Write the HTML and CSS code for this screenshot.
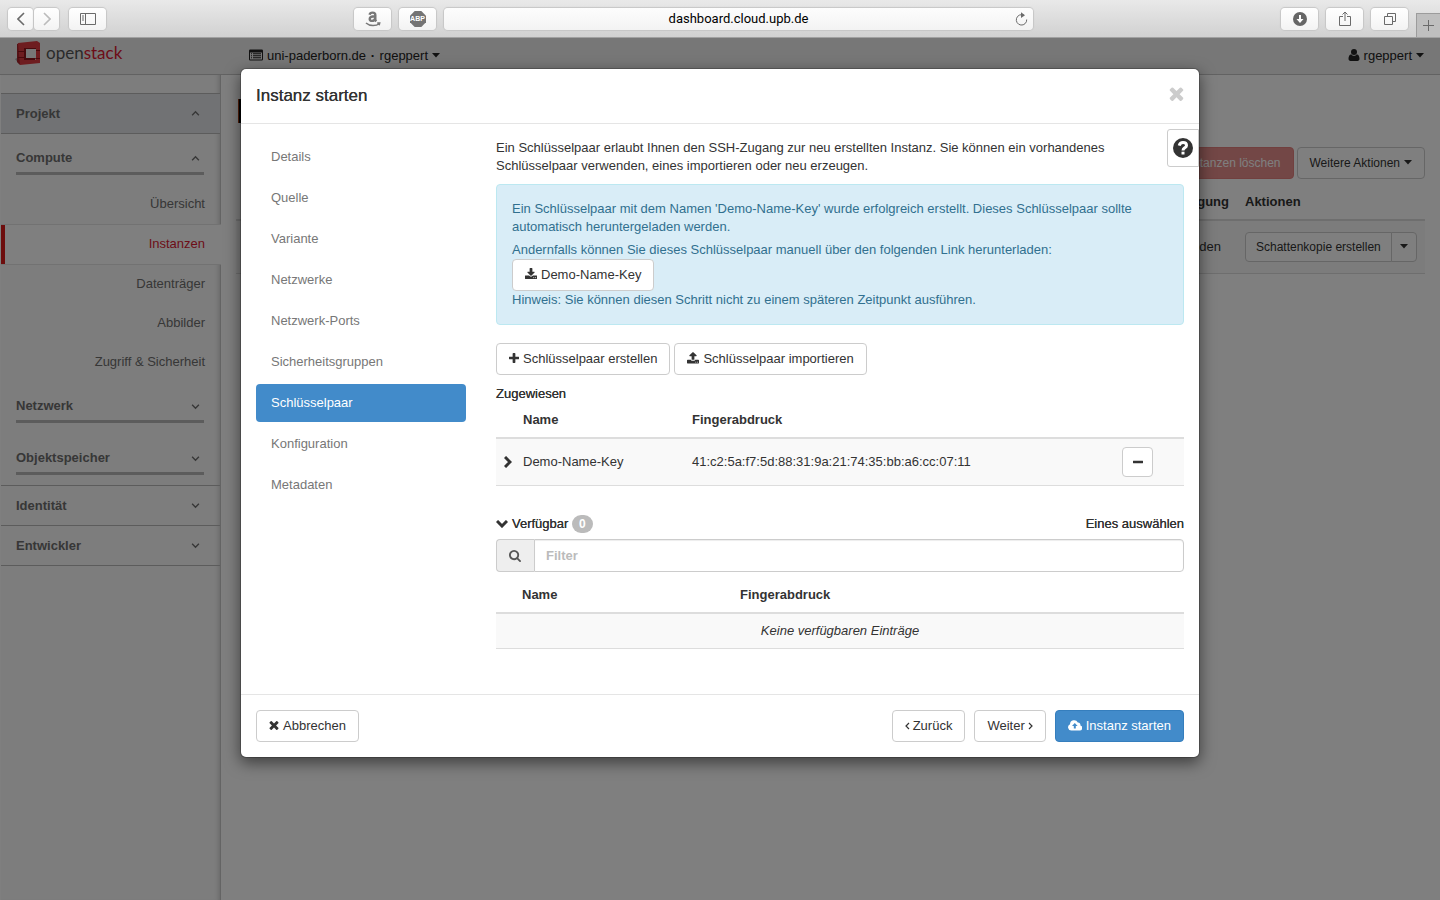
FILE: index.html
```html
<!DOCTYPE html>
<html lang="de">
<head>
<meta charset="utf-8">
<title>Instanz starten</title>
<link rel="stylesheet" href="styles.css">
</head>
<body>
<svg class="sprite" aria-hidden="true">
  <symbol id="caret" viewBox="0 0 8 5"><path d="M0 0h8L4 4.500z"/></symbol>
  <symbol id="up" viewBox="0 0 8 8"><path class="thin" d="M1 5.500 4 2.500 7 5.500"/></symbol>
  <symbol id="down" viewBox="0 0 8 8"><path class="thin" d="M1 2.500 4 5.500 7 2.500"/></symbol>
  <symbol id="plus" viewBox="192 128 1408 1408"><path d="M1600 736v192q0 40-28 68t-68 28h-416v416q0 40-28 68t-68 28h-192q-40 0-68-28t-28-68v-416h-416q-40 0-68-28t-28-68v-192q0-40 28-68t68-28h416v-416q0-40 28-68t68-28h192q40 0 68 28t28 68v416h416q40 0 68 28t28 68z"/></symbol>
  <symbol id="minus" viewBox="192 128 1408 1408"><path d="M1600 736v192q0 40-28 68t-68 28h-1216q-40 0-68-28t-28-68v-192q0-40 28-68t68-28h1216q40 0 68 28t28 68z"/></symbol>
  <symbol id="times" viewBox="240 240 1312 1312"><path d="M1490 1322q0 40-28 68l-136 136q-28 28-68 28t-68-28l-294-294-294 294q-28 28-68 28t-68-28l-136-136q-28-28-28-68t28-68l294-294-294-294q-28-28-28-68t28-68l136-136q28-28 68-28t68 28l294 294 294-294q28-28 68-28t68 28l136 136q28 28 28 68t-28 68l-294 294 294 294q28 28 28 68z"/></symbol>
  <symbol id="download" viewBox="64 0 1664 1664"><path d="M1344 1344q0-26-19-45t-45-19-45 19-19 45 19 45 45 19 45-19 19-45zm256 0q0-26-19-45t-45-19-45 19-19 45 19 45 45 19 45-19 19-45zm128-224v320q0 40-28 68t-68 28h-1472q-40 0-68-28t-28-68v-320q0-40 28-68t68-28h465l135 136q58 56 136 56t136-56l136-136h464q40 0 68 28t28 68zm-325-569q17 41-14 70l-448 448q-18 19-45 19t-45-19l-448-448q-31-29-14-70 17-39 59-39h256v-448q0-26 19-45t45-19h256q26 0 45 19t19 45v448h256q42 0 59 39z"/></symbol>
  <symbol id="upload" viewBox="64 64 1664 1664"><path d="M1344 1472q0-26-19-45t-45-19-45 19-19 45 19 45 45 19 45-19 19-45zm256 0q0-26-19-45t-45-19-45 19-19 45 19 45 45 19 45-19 19-45zm128-224v320q0 40-28 68t-68 28h-1472q-40 0-68-28t-28-68v-320q0-40 28-68t68-28h427q21 56 70.500 92t110.500 36h256q61 0 110.500-36t70.500-92h427q40 0 68 28t28 68zm-325-648q-17 40-59 40h-256v448q0 26-19 45t-45 19h-256q-26 0-45-19t-19-45v-448h-256q-42 0-59-40-17-39 14-69l448-448q18-19 45-19t45 19l448 448q31 30 14 69z"/></symbol>
  <symbol id="search" viewBox="64 128 1664 1664"><path d="M1216 832q0-185-131.500-316.500t-316.500-131.500-316.500 131.500-131.500 316.500 131.500 316.500 316.500 131.500 316.500-131.500 131.500-316.500zm512 832q0 52-38 90t-90 38q-54 0-90-38l-343-342q-179 124-399 124-143 0-273.500-55.500t-225-150-150-225-55.500-273.500 55.500-273.500 150-225 225-150 273.500-55.500 273.500 55.500 225 150 150 225 55.500 273.500q0 220-124 399l343 343q37 37 37 90z"/></symbol>
  <symbol id="user" viewBox="0 0 12 12"><circle cx="6" cy="3" r="3"/><path d="M3.300 5.200C1.300 5.600.5 7.500.5 9.800c0 1.300.8 2.200 2 2.200h7c1.200 0 2-.9 2-2.200 0-2.300-.8-4.200-2.800-4.600C8 6.200 7 6.700 6 6.700s-2-.5-2.700-1.500z"/></symbol>
  <symbol id="list" viewBox="0 0 14 12"><path fill-rule="evenodd" d="M1.200.5h11.600q1.200 0 1.200 1.200v8.600q0 1.200-1.200 1.200H1.200Q0 11.500 0 10.300V1.700Q0 .5 1.200.5zM1 3.500v6.700l.3.300h11.400l.3-.3V3.500z"/><path d="M2 4.300h1v1H2zm2 0h8v1H4zm-2 2h1v1H2zm2 0h8v1H4zm-2 2h1v1H2zm2 0h8v1H4z"/></symbol>
  <symbol id="cloud" viewBox="0 1 14 11"><path fill-rule="evenodd" d="M3.500 11.500A3.300 3.300 0 0 1 2 5.200 4.100 4.100 0 0 1 9.800 3.600a2.400 2.400 0 0 1 2.600 2.800 2.600 2.600 0 0 1-.9 5.100zM6.800 4 4 6.900h1.800v2.700h2V6.900h1.800z"/></symbol>
  <symbol id="help" viewBox="0 0 20 20"><circle cx="10" cy="10" r="10"/><path fill="none" stroke="#fff" stroke-width="3" d="M6.200 7.600C6.800 5.500 8.200 4.500 10 4.500c2 0 3.500 1.100 3.500 2.900 0 2.500-3.500 2.400-3.500 5"/><path fill="#fff" d="M8.500 13.700h3v2.800h-3z"/></symbol>
</svg>

<header class="browser">
  <div class="tools">
    <div class="pair">
      <button class="tool half" aria-label="Zurück"><svg width="8" height="14" viewBox="0 0 8 14"><path class="line bold" d="M7 1 1 7l6 6"/></svg></button>
      <button class="tool half faint" aria-label="Vorwärts"><svg width="8" height="14" viewBox="0 0 8 14"><path class="line bold" d="m1 1 6 6-6 6"/></svg></button>
    </div>
    <button class="tool" aria-label="Seitenleiste"><svg width="16" height="12" viewBox="0 0 16 12"><path class="line" d="M.5.500h15v11H.5zM5.500.500v11M2 3h2M2 5h2M2 7h2"/></svg></button>
  </div>
  <div class="tools">
    <button class="tool" aria-label="Amazon"><svg width="16" height="16" viewBox="0 0 16 16"><path fill="none" stroke="#777" stroke-width="2.400" d="M4.600 3.800C4.900 2.100 6.100 1.600 7.600 1.600c1.800 0 2.700.8 2.700 2.400v4.200c0 1 .3 1.500 1 2.200M10.200 5.200C6.500 5.100 4.700 6 4.700 7.900c0 2.700 4.500 2.800 5.500-.6"/><path fill="none" stroke="#777" stroke-width="1.500" d="M1 12c4 3.500 10 3.300 13.500.5M12.200 12h2.500l-.6 2.300"/></svg></button>
    <button class="tool abp">
      <svg width="16" height="16" viewBox="0 0 16 16" aria-hidden="true"><path fill="#747474" d="M4.700 0h6.600L16 4.700v6.600L11.300 16H4.700L0 11.300V4.700z"/></svg>
      <span>ABP</span>
    </button>
    <div class="address"><span>dashboard.cloud.upb.de</span>
      <svg width="13" height="14" viewBox="0 0 13 14"><path class="line" d="M9 3.300A5.200 5.200 0 1 0 11.700 7.500"/><path fill="#6a6a6a" d="M6 .300 10 3.300 6 6z"/></svg>
    </div>
  </div>
  <div class="tools end">
    <button class="tool" aria-label="Downloads"><svg width="14" height="14" viewBox="0 0 14 14"><circle cx="7" cy="7" r="7" fill="#666"/><path fill="#fff" d="M6 3h2v4h2.500L7 11 3.500 7H6z"/></svg></button>
    <button class="tool" aria-label="Teilen"><svg width="12" height="16" viewBox="0 0 12 16"><path class="line" d="M4 5.500H.5v9h11v-9H8M6 10V1M3.500 3.500 6 1l2.500 2.500"/></svg></button>
    <button class="tool" aria-label="Tabs"><svg width="12" height="12" viewBox="0 0 12 12"><path class="line" d="M.5 3.500h8v8h-8zM3.500 3.500v-3h8v8h-3"/></svg></button>
    <button class="newtab" aria-label="Neuer Tab"><svg width="11" height="11" viewBox="0 0 11 11"><path class="line" d="M5.500 0v11M0 5.500h11"/></svg></button>
  </div>
</header>

<div class="app">
  <div class="topbar">
    <div class="brand">
      <svg width="26" height="25" viewBox="0 0 26 25" aria-hidden="true"><path fill="#aaa" d="m0 18 4-2v7z"/><path fill="#a8242a" d="m2 3 3-1v22l-3-3z"/><path fill="#dc3a40" fill-rule="evenodd" d="M3 2 22 0l3 2v20L5 24zM9 7v12h12V7z"/><path fill="#eee" d="M11 8h10v9H11z"/><path fill="#8f151b" d="M9 7h12v1H11v9l-2 2zM3 10h6v1H3zM3 16h6v1H3zM21 9h4v1h-4zM21 17h4v1h-4zM11 17h10l-1 2H9z"/></svg>
      <span>open<b>stack</b></span>
    </div>
    <a class="context" href="#"><svg class="list" width="14" height="12"><use href="#list"/></svg>uni-paderborn.de <b>·</b> rgeppert<svg class="caret"><use href="#caret"/></svg></a>
    <a class="account" href="#"><svg class="person" width="12" height="12"><use href="#user"/></svg>rgeppert<svg class="caret"><use href="#caret"/></svg></a>
  </div>
  <div class="page">
    <nav class="sidebar">
      <button class="panel current">Projekt<svg class="angle"><use href="#up"/></svg></button>
      <button class="group">Compute<svg class="angle"><use href="#up"/></svg></button>
      <ul class="links">
        <li><a href="#">Übersicht</a></li>
        <li><a class="active" href="#">Instanzen</a></li>
        <li><a href="#">Datenträger</a></li>
        <li><a href="#">Abbilder</a></li>
        <li><a href="#">Zugriff &amp; Sicherheit</a></li>
      </ul>
      <button class="group">Netzwerk<svg class="angle"><use href="#down"/></svg></button>
      <button class="group last">Objektspeicher<svg class="angle"><use href="#down"/></svg></button>
      <button class="panel">Identität<svg class="angle"><use href="#down"/></svg></button>
      <button class="panel">Entwickler<svg class="angle"><use href="#down"/></svg></button>
    </nav>
    <main class="main">
      <div class="mark"></div>
      <div class="actions">
        <button class="btn danger" disabled>Instanzen löschen</button>
        <button class="btn">Weitere Aktionen<svg class="caret"><use href="#caret"/></svg></button>
      </div>
      <table class="table instances">
        <thead><tr><th class="age">Erzeugung</th><th class="do">Aktionen</th></tr></thead>
        <tbody><tr><td class="age">Stunden</td><td class="do"><div class="split"><button class="btn">Schattenkopie erstellen</button><button class="btn" aria-label="Mehr"><svg class="caret"><use href="#caret"/></svg></button></div></td></tr></tbody>
      </table>
    </main>
  </div>

  <div class="backdrop">
    <section class="modal" role="dialog" aria-labelledby="title">
      <header class="modal-head">
        <h1 id="title">Instanz starten</h1>
        <button class="close" aria-label="Schließen"><svg width="15" height="15"><use href="#times"/></svg></button>
      </header>
      <div class="modal-body">
        <button class="help" aria-label="Hilfe"><svg width="20" height="20"><use href="#help"/></svg></button>
        <ul class="steps">
          <li><a href="#">Details</a></li>
          <li><a href="#">Quelle</a></li>
          <li><a href="#">Variante</a></li>
          <li><a href="#">Netzwerke</a></li>
          <li><a href="#">Netzwerk-Ports</a></li>
          <li><a href="#">Sicherheitsgruppen</a></li>
          <li><a class="active" href="#">Schlüsselpaar</a></li>
          <li><a href="#">Konfiguration</a></li>
          <li><a href="#">Metadaten</a></li>
        </ul>
        <div class="content">
          <p class="intro">Ein Schlüsselpaar erlaubt Ihnen den SSH-Zugang zur neu erstellten Instanz. Sie können ein vorhandenes Schlüsselpaar verwenden, eines importieren oder neu erzeugen.</p>
          <div class="alert">
            <p>Ein Schlüsselpaar mit dem Namen 'Demo-Name-Key' wurde erfolgreich erstellt. Dieses Schlüsselpaar sollte automatisch heruntergeladen werden.</p>
            <p>Andernfalls können Sie dieses Schlüsselpaar manuell über den folgenden Link herunterladen:</p>
            <a class="btn" href="#"><svg class="icon"><use href="#download"/></svg>Demo-Name-Key</a>
            <p>Hinweis: Sie können diesen Schritt nicht zu einem späteren Zeitpunkt ausführen.</p>
          </div>
          <div class="create">
            <button class="btn"><svg class="icon small"><use href="#plus"/></svg>Schlüsselpaar erstellen</button>
            <button class="btn"><svg class="icon"><use href="#upload"/></svg>Schlüsselpaar importieren</button>
          </div>
          <h2>Zugewiesen</h2>
          <table class="table assigned">
            <thead><tr><th class="toggle"></th><th class="name">Name</th><th>Fingerabdruck</th><th class="act"></th></tr></thead>
            <tbody><tr><td class="toggle"><svg width="8" height="12" viewBox="0 0 8 12"><path class="thick" d="m1 1 5 5-5 5"/></svg></td><td>Demo-Name-Key</td><td>41:c2:5a:f7:5d:88:31:9a:21:74:35:bb:a6:cc:07:11</td><td><button class="btn remove" aria-label="Entfernen"><svg width="10" height="10"><use href="#minus"/></svg></button></td></tr></tbody>
          </table>
          <div class="available">
            <h2><svg width="12" height="8" viewBox="0 0 12 8"><path class="thick" d="m1 1 5 5 5-5"/></svg>Verfügbar <span class="badge">0</span></h2>
            <span>Eines auswählen</span>
          </div>
          <div class="filter">
            <label for="filter" aria-label="Filter"><svg width="12" height="12"><use href="#search"/></svg></label>
            <input id="filter" type="text" placeholder="Filter">
          </div>
          <table class="table choices">
            <thead><tr><th class="toggle"></th><th class="name">Name</th><th>Fingerabdruck</th></tr></thead>
            <tbody><tr><td class="empty" colspan="3">Keine verfügbaren Einträge</td></tr></tbody>
          </table>
        </div>
      </div>
      <footer class="modal-foot">
        <button class="btn cancel"><svg class="icon small"><use href="#times"/></svg>Abbrechen</button>
        <button class="btn"><svg class="step before" viewBox="0 0 5 8"><path class="thin" d="M4 1 1 4l3 3"/></svg>Zurück</button>
        <button class="btn">Weiter<svg class="step after" viewBox="0 0 5 8"><path class="thin" d="m1 1 3 3-3 3"/></svg></button>
        <button class="btn primary"><svg class="cloud" width="14" height="11"><use href="#cloud"/></svg>Instanz starten</button>
      </footer>
    </section>
  </div>
</div>
</body>
</html>
```
FILE: styles.css
```css
* { box-sizing: border-box; }

body {
  margin: 0;
  min-height: 100vh;
  display: flex;
  flex-direction: column;
  font: 13px/18px "Liberation Sans", Arial, sans-serif;
  color: #333;
}

button, input { font: inherit; color: inherit; margin: 0; }
button { cursor: pointer; }
a { color: inherit; text-decoration: none; }
ul { list-style: none; margin: 0; padding: 0; }
p, h1, h2 { margin: 0; }
svg { fill: currentColor; flex: none; }

.sprite { display: none; }
.thin { fill: none; stroke: currentColor; stroke-width: 1.2; }
.thick { fill: none; stroke: currentColor; stroke-width: 3; }
.line { fill: none; stroke: #6a6a6a; stroke-width: 1; }
.bold { stroke-width: 1.6; }
.caret { width: 8px; height: 5px; margin-left: 4px; }
.icon { width: 12px; height: 12px; margin-right: 4px; }

/* Browser toolbar */
.browser {
  display: grid;
  grid-template-columns: 354fr 679fr 407fr;
  height: 38px;
  background: linear-gradient(#e9e9e9, #d1d1d1);
  border-bottom: 1px solid #a1a1a1;
}
.tools { display: flex; align-items: center; gap: 8px; }
.tools:first-child { padding-left: 8px; }
.pair { display: flex; gap: 1px; margin-right: 2px; }
.tool {
  display: flex;
  align-items: center;
  justify-content: center;
  width: 37px;
  height: 22px;
  padding: 0;
  border: 0;
  border-radius: 4px;
  background: linear-gradient(#fff, #f3f3f3);
  box-shadow: 0 0 1px 1px #c6c6c6;
}
.half { width: 25px; }
.faint .line { stroke: #bbb; }
.abp { position: relative; }
.abp span {
  position: absolute;
  inset: 0;
  font: bold 7px/22px "Liberation Sans", sans-serif;
  color: #fff;
}
.address {
  flex: 1;
  display: flex;
  align-items: center;
  height: 22px;
  padding: 0 5px 0 18px;
  border-radius: 4px;
  background: linear-gradient(#fdfdfd, #f3f3f3);
  box-shadow: 0 0 1px 1px #c6c6c6;
  font: 13px/18px Roboto, sans-serif;
  color: #000;
}
.address span { flex: 1; text-align: center; }
.end { justify-content: flex-end; }
.newtab {
  align-self: flex-end;
  width: 24px;
  height: 24px;
  padding: 0;
  border: 1px solid #9c9c9c;
  border-width: 1px 0 0 1px;
  background: #bfbfbf;
  display: flex;
  align-items: center;
  justify-content: center;
}

/* Dashboard */
.app {
  position: relative;
  flex: 1;
  display: flex;
  flex-direction: column;
}
.topbar {
  display: flex;
  align-items: center;
  height: 37px;
  padding: 0 16px 0 15px;
  background: #eee;
  border-bottom: 1px solid #c4c4c4;
  color: #222;
}
.brand { display: flex; gap: 5px; width: 234px; height: 30px; }
.brand span {
  font: 17px/24px Lato, sans-serif;
  color: #555;
}
.brand b { font-weight: normal; color: #da1a32; }
.list { margin-right: 4px; vertical-align: -1px; }
.context b { margin: 0 1px; }
.person { margin-right: 4px; vertical-align: -1px; }
.topbar .caret { vertical-align: 2px; }
.account { margin-left: auto; }
.page { flex: 1; display: flex; }

.sidebar {
  width: 221px;
  padding-top: 18px;
  border: 1px solid #c8c8c8;
  border-width: 0 1px;
  border-left-color: #fff;
  background: #fafafa;
  box-shadow: inset -5px 0 5px -4px #ccc;
  color: #6e6e6e;
}
.panel, .group {
  display: flex;
  align-items: center;
  justify-content: space-between;
  border: 0 solid #b8b8b8;
  background: none;
  font-weight: bold;
  text-align: left;
}
.panel {
  width: 100%;
  height: 40px;
  padding: 0 20px 0 15px;
  border-bottom-width: 1px;
}
.current {
  height: 41px;
  border-top-width: 1px;
  background: #e2e5e8;
}
.group {
  width: 188px;
  margin: 15px 15px 0;
  padding: 0 4px 5px 0;
  border-bottom-width: 3px;
}
.angle { width: 9px; height: 9px; }
.links { padding: 10px 0 0; text-align: right; }
.links a { display: block; padding: 10px 15px 11px; }
.links .active {
  margin-right: -1px;
  padding-right: 16px;
  border: 1px solid #e4e4e4;
  border-width: 1px 0;
  background: #fff;
  box-shadow: inset 4px 0 #da1a1a;
  color: #da1a32;
}
.last { margin: 26px 15px 10px; }
.last + .panel { height: 41px; border-top-width: 1px; }

.main { flex: 1; padding: 0 15px; }
.mark {
  width: 200px;
  height: 24px;
  margin: 24px 0 24px 2px;
  background: #000;
  border-left: 1px solid #a43c14;
}
.actions { display: flex; justify-content: flex-end; gap: 3px; font-size: 12px; }
.btn {
  display: inline-block;
  padding: 6px 12px;
  border: 1px solid #ccc;
  border-radius: 4px;
  background: #fff;
  white-space: nowrap;
}
.btn svg { vertical-align: -1px; }
.btn .caret { vertical-align: 2px; }
.actions .btn { padding: 6px 12px; }
.danger { background: #d9534f; border-color: #d43f3a; color: #fff; opacity: 0.65; }
.instances .age { text-align: right; }
.instances td.age { padding-right: 16px; }
.instances .do { width: 188px; }
.instances { margin-top: 6px; }
.split { display: flex; font-size: 12px; }
.split .btn { padding: 5px 10px; }
.split .btn:first-child { border-radius: 4px 0 0 4px; }
.split .btn:last-child { margin-left: -1px; padding: 5px 8px; border-radius: 0 4px 4px 0; }
.split .caret { margin-left: 0; }

.table { width: 100%; border-collapse: separate; border-spacing: 0; table-layout: fixed; }
.table th { height: 36px; padding: 8px; border-bottom: 2px solid #ddd; text-align: left; }
.table td { padding: 8px; border-bottom: 1px solid #ddd; background: #f9f9f9; }
.instances td { padding-top: 11px; padding-bottom: 11px; }

/* Dialog */
.backdrop {
  position: absolute;
  inset: 0;
  padding: 30px 15px;
  background: rgba(0, 0, 0, 0.5);
}
.modal {
  max-width: 960px;
  margin: 0 auto;
  border: 1px solid rgba(0, 0, 0, 0.2);
  border-radius: 6px;
  background: #fff;
  background-clip: padding-box;
  box-shadow: 0 5px 15px rgba(0, 0, 0, 0.5);
}
.modal-head {
  display: flex;
  justify-content: space-between;
  align-items: flex-start;
  padding: 15px;
  border-bottom: 1px solid #e5e5e5;
}
.modal-head h1 { font-size: 17px; line-height: 24px; font-weight: 500; }
.modal-head h1, h2, .available { text-shadow: 0 0 0 currentColor; }
.close { display: flex; padding: 2px 0; border: 0; background: none; color: #ccc; }
.modal-body {
  position: relative;
  display: grid;
  grid-template-columns: 210px 1fr;
  gap: 30px;
  padding: 14px 15px 45px;
}
.help {
  position: absolute;
  top: 5px;
  right: 0;
  width: 32px;
  height: 38px;
  padding: 0;
  border: 1px solid #ccc;
  border-radius: 3px 0 0 3px;
  background: #fff;
  display: flex;
  align-items: center;
  justify-content: center;
}
.steps { display: flex; flex-direction: column; gap: 3px; color: #777; }
.steps a { display: block; padding: 10px 15px; border-radius: 4px; }
.steps .active { background: #428bca; color: #fff; }
.intro { margin: 1px 0 9px; }
.alert {
  margin-bottom: 18px;
  padding: 15px;
  border: 1px solid #bce8f1;
  border-radius: 4px;
  background: #d9edf7;
  color: #31708f;
}
.alert p:first-child { margin-bottom: 5px; }
.alert .btn { display: block; width: fit-content; color: #333; }
.create { display: flex; gap: 4px; margin-bottom: 10px; }
h2 { font-size: 13px; line-height: 18px; font-weight: 500; }
.assigned .toggle { width: 19px; padding-right: 0; }
.assigned .name { width: 169px; }
.assigned .act { width: 70px; }
.toggle svg { display: block; }
.remove {
  display: flex;
  align-items: center;
  justify-content: center;
  width: 31px;
  height: 30px;
  padding: 0;
}
.available { display: flex; justify-content: space-between; margin: 29px 0 6px; }
.available h2 svg { margin-right: 4px; }
.badge {
  display: inline-block;
  padding: 0 7px;
  border-radius: 9px;
  background: #bbb;
  color: #fff;
  font-weight: bold;
  font-size: 12px;
  text-shadow: none;
}
.filter { display: flex; height: 33px; margin-bottom: 6px; }
.filter label {
  display: flex;
  align-items: center;
  padding: 0 13px 0 12px;
  border: 1px solid #ccc;
  border-right: 0;
  border-radius: 4px 0 0 4px;
  background: #eee;
  color: #555;
}
.filter input {
  flex: 1;
  min-width: 0;
  padding: 0 11px;
  border: 1px solid #ccc;
  border-radius: 0 4px 4px 0;
  box-shadow: inset 0 1px 1px rgba(0, 0, 0, 0.075);
}
.filter input::placeholder { color: #bbb; font-weight: bold; opacity: 1; }
.choices .toggle { width: 18px; padding: 0; }
.choices .name { width: 218px; }
.choices .empty { text-align: center; font-style: italic; }

.modal-foot {
  display: flex;
  gap: 9px;
  padding: 15px;
  border-top: 1px solid #e5e5e5;
}
.cancel { margin-right: auto; }
.icon.small { width: 10px; height: 10px; }
.btn .icon.small { vertical-align: 0; }
.btn .step { width: 5px; height: 8px; vertical-align: 0; }
.before { margin-right: 3px; }
.after { margin-left: 3px; }
.cloud { margin-right: 4px; }
.primary { background: #428bca; border-color: #357ebd; color: #fff; }
```
